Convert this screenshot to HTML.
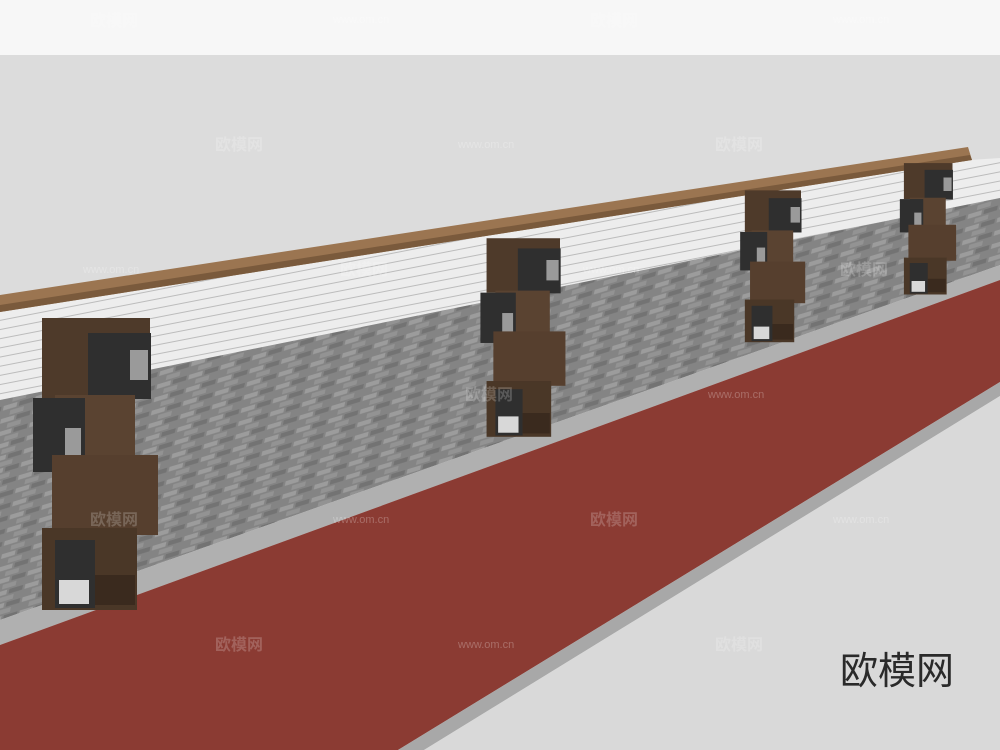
<!DOCTYPE html>
<html><head><meta charset="utf-8"><style>
html,body{margin:0;padding:0;width:1000px;height:750px;overflow:hidden;background:#dcdcdc;font-family:"Liberation Sans","Noto Sans CJK SC",sans-serif}
svg{display:block}
</style></head><body>
<svg width="1000" height="750" viewBox="0 0 1000 750" xmlns="http://www.w3.org/2000/svg">
<defs>
<pattern id="pave" width="28" height="14" patternUnits="userSpaceOnUse" patternTransform="skewX(-30) rotate(-20)">
<rect width="28" height="14" fill="#848484"/>
<rect x="1" y="1" width="12" height="5" fill="#9c9c9c"/>
<rect x="15" y="1" width="12" height="5" fill="#737373"/>
<rect x="8" y="8" width="12" height="5" fill="#939393"/>
</pattern>
<pattern id="wallp" width="10" height="9" patternUnits="userSpaceOnUse" patternTransform="rotate(-11)">
<rect width="10" height="9" fill="#ededed"/>
<rect y="8" width="10" height="1" fill="#bcbcbc"/>
</pattern>
<g id="totem">
<rect x="42" y="318" width="108" height="80" fill="#4e3a2a"/>
<rect x="88" y="333" width="63" height="66" fill="#2f2f2f"/>
<rect x="130" y="350" width="18" height="30" fill="#9a9a9a"/>
<rect x="55" y="395" width="80" height="70" fill="#5a4331"/>
<rect x="33" y="398" width="52" height="74" fill="#2f2f2f"/>
<rect x="65" y="428" width="16" height="28" fill="#9a9a9a"/>
<rect x="52" y="455" width="106" height="80" fill="#563f2e"/>
<rect x="42" y="528" width="95" height="82" fill="#4a3727"/>
<rect x="55" y="540" width="40" height="68" fill="#2f2f2f"/>
<rect x="59" y="580" width="30" height="24" fill="#d8d8d8"/>
<rect x="95" y="575" width="40" height="30" fill="#3a2a1e"/>
</g>
</defs>
<rect width="1000" height="55" fill="#f7f7f7"/>
<rect y="55" width="1000" height="695" fill="#dcdcdc"/>
<polygon points="0,310 970,160 1000,158 1000,198 0,400" fill="url(#wallp)"/>
<polygon points="0,295 968,147 972,160 0,312" fill="#9b7551"/>
<polygon points="0,305 970,155 972,160 0,312" fill="#7a5a3c"/>
<polygon points="0,400 1000,198 1000,265 0,620" fill="url(#pave)"/>
<polygon points="0,620 1000,265 1000,280 0,645" fill="#b0b0b0"/>
<polygon points="0,645 1000,280 1000,382 398,750 0,750" fill="#8b3b33"/>
<polygon points="398,750 1000,382 1000,396 424,750" fill="#a8a8a8"/>
<polygon points="424,750 1000,396 1000,750" fill="#d9d9d9"/>
<use href="#totem"/>
<use href="#totem" transform="translate(458,22) scale(0.68)"/>
<use href="#totem" transform="translate(723,25) scale(0.52)"/>
<use href="#totem" transform="translate(885,20) scale(0.45)"/>
<text x="840" y="684" font-size="38" fill="#2a2a2a">欧模网</text>
<g fill="#ffffff" opacity="0.2" font-size="16" font-weight="bold">
<text x="90" y="26">欧模网</text><text x="590" y="26">欧模网</text>
<text x="215" y="150">欧模网</text><text x="715" y="150">欧模网</text>
<text x="340" y="275">欧模网</text><text x="840" y="275">欧模网</text>
<text x="465" y="400">欧模网</text><text x="90" y="525">欧模网</text><text x="590" y="525">欧模网</text>
<text x="215" y="650">欧模网</text><text x="715" y="650">欧模网</text>
</g>
<g fill="#ffffff" opacity="0.25" font-size="11">
<text x="333" y="23">www.om.cn</text><text x="833" y="23">www.om.cn</text>
<text x="458" y="148">www.om.cn</text><text x="83" y="273">www.om.cn</text>
<text x="583" y="273">www.om.cn</text><text x="708" y="398">www.om.cn</text>
<text x="333" y="523">www.om.cn</text><text x="833" y="523">www.om.cn</text>
<text x="458" y="648">www.om.cn</text>
</g>
</svg>
</body></html>
